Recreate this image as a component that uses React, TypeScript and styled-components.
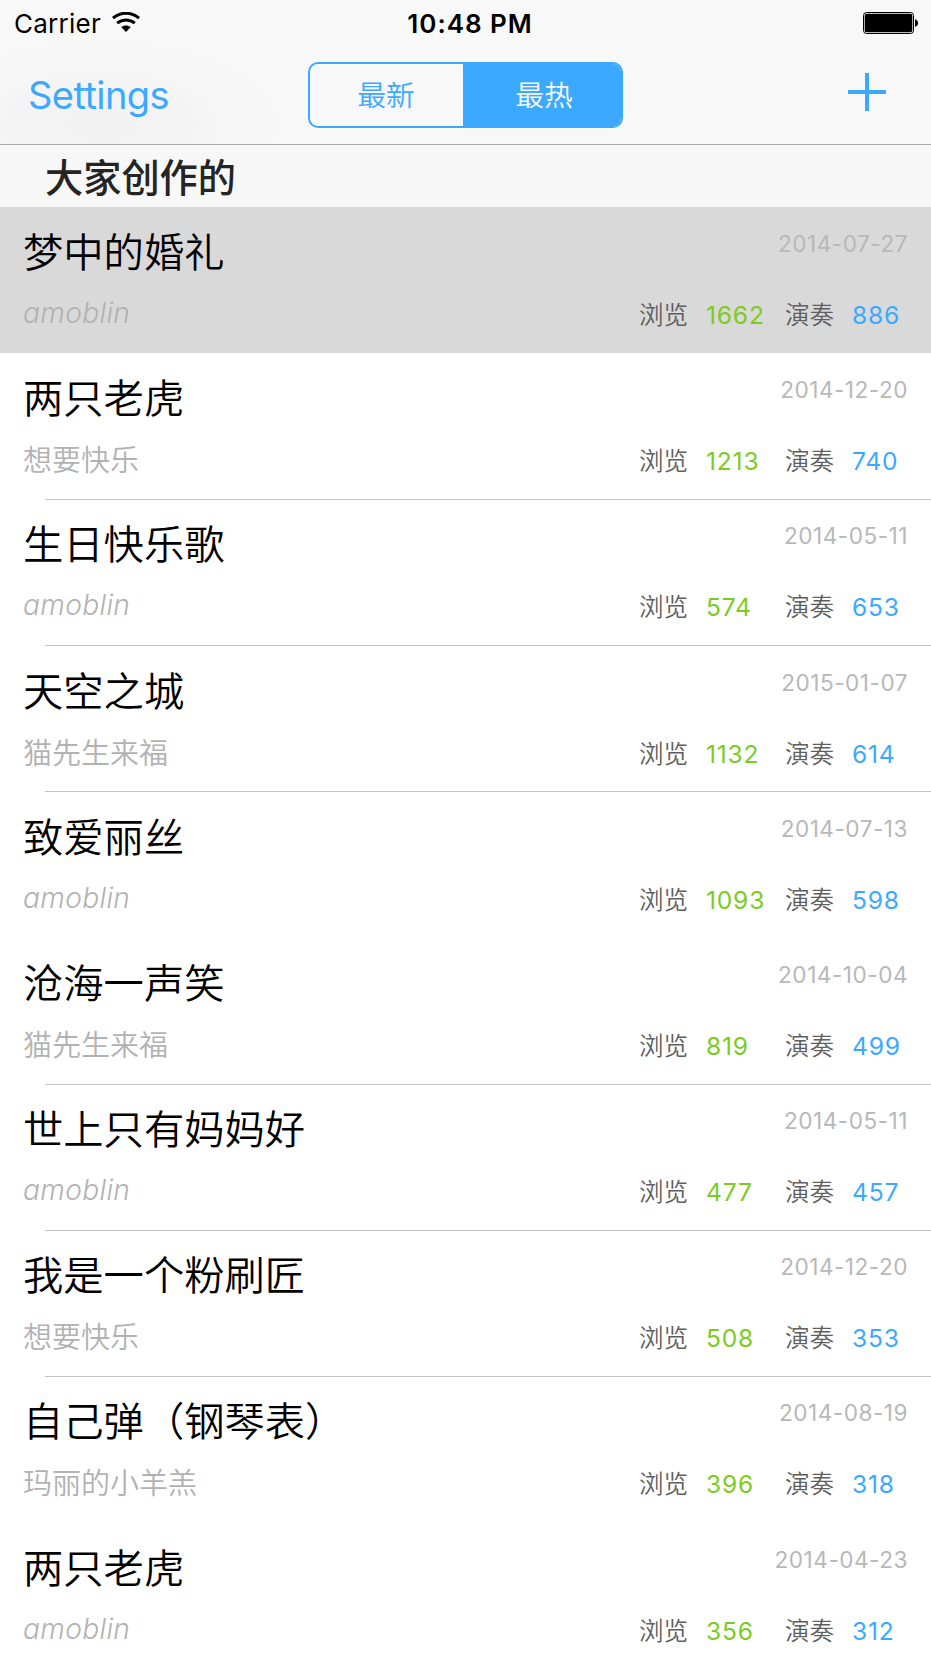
import React from "react";
import styled, { createGlobalStyle } from "styled-components";

const GlobalStyle = createGlobalStyle`
  *, *::before, *::after { box-sizing: border-box; }
  body {
    margin: 0;
    background: #fff;
    overflow: hidden;
    font-family: Inter, "Noto Sans CJK SC", sans-serif;
  }
`;

const Screen = styled.main`
  width: 931px;
  height: 1656px;
  overflow: hidden;
  display: flex;
  flex-direction: column;
  background: #fff;
`;

const TopBar = styled.header`
  flex: none;
  height: 145px;
  background: radial-gradient(ellipse 190px 90px at 100px 125px, #f1f1f1, rgba(247, 247, 247, 0)), #f8f8f8;
  border-bottom: 1px solid #a9a9a9;
`;

const StatusBar = styled.div`
  display: grid;
  grid-template-columns: 1fr auto 1fr;
  align-items: center;
  height: 47px;
  padding: 0 13px 0 14px;
  font-size: 26px;
  line-height: 47px;
  color: #000;
`;

const Carrier = styled.div`
  display: flex;
  align-items: center;
  gap: 11px;
  letter-spacing: 0.25px;

  svg { margin-top: -3px; }
`;

const Clock = styled.div`
  font-weight: 600;
  letter-spacing: 0.95px;
  padding-left: 8px;
`;

const Battery = styled.svg`
  justify-self: end;
  margin-top: -1px;
`;

const NavBar = styled.nav`
  display: grid;
  grid-template-columns: 1fr 315px 1fr;
  align-items: center;
  height: 95px;
  padding: 0 28px;
`;

const TextButton = styled.button`
  justify-self: start;
  padding: 0;
  border: 0;
  background: none;
  font: 400 38px/48px Inter, sans-serif;
  letter-spacing: -0.55px;
  color: #3ba9ff;
`;

const Segmented = styled.div`
  display: flex;
  height: 66px;
  border: 2px solid #3ba9ff;
  border-radius: 10px;
  overflow: hidden;
`;

const Segment = styled.button<{ $active?: boolean }>`
  flex: ${(p) => (p.$active ? "0 0 158px" : "1")};
  padding: ${(p) => (p.$active ? "0 0 2px 4px" : "0 1px 2px 0")};
  border: 0;
  background: ${(p) => (p.$active ? "#3ba9ff" : "transparent")};
  color: ${(p) => (p.$active ? "#f8f8f8" : "#3ba9ff")};
  font: 350 28.8px/60px "Noto Sans CJK SC", sans-serif;
`;

const AddButton = styled.button`
  justify-self: end;
  display: flex;
  margin: -5px 17px 0 0;
  padding: 0;
  border: 0;
  background: none;
`;

const SectionTitle = styled.h2`
  flex: none;
  height: 61.7px;
  margin: 0;
  padding-left: 45px;
  background: #f7f7f7;
  font-size: 38.2px;
  font-weight: 500;
  line-height: 66px;
  color: #242424;
`;

const SongList = styled.ul`
  margin: 0;
  padding: 0;
  list-style: none;
`;

const SongRow = styled.li<{ $selected?: boolean; $lineAbove?: boolean }>`
  display: flex;
  flex-direction: column;
  height: 146.18px;
  padding: 15.3px 23px 0 23px;
  background: ${(p) =>
    p.$selected
      ? "#d9d9d9"
      : p.$lineAbove
        ? "linear-gradient(#c4c4c4, #c4c4c4) 45px 0 / 100% 1px no-repeat"
        : "#fff"};
`;

const RowLine = styled.div<{ $height: number }>`
  display: flex;
  justify-content: space-between;
  height: ${(p) => p.$height}px;
`;

const SongTitle = styled.h3`
  margin: 0;
  font-family: "Noto Sans CJK SC", sans-serif;
  font-size: 40.3px;
  font-weight: 350;
  line-height: 55px;
  color: #000;
`;

const SongDate = styled.time`
  font-size: 22.6px;
  line-height: 44px;
  letter-spacing: 0.5px;
  color: #b8b8b8;
`;

const Author = styled.span<{ $latin: boolean }>`
  font-size: ${(p) => (p.$latin ? 28.2 : 29)}px;
  font-style: ${(p) => (p.$latin ? "italic" : "normal")};
  font-weight: 350;
  letter-spacing: ${(p) => (p.$latin ? 0.3 : 0)}px;
  line-height: ${(p) => (p.$latin ? 63.5 : 65)}px;
  color: #b2b2b2;
`;

const Stats = styled.div`
  display: grid;
  grid-template-columns: 67px 79px 67px 56px;
  line-height: 66px;
  font-size: 24.6px;
`;

const StatLabel = styled.span`
  font-weight: 350;
  color: #5f5f5f;
`;

const StatValue = styled.span<{ $color: string }>`
  letter-spacing: 0.8px;
  color: ${(p) => p.$color};
`;

type Song = {
  title: string;
  author: string;
  date: string;
  views: number;
  plays: number;
  selected?: boolean;
  divided?: boolean;
};

const songs: Song[] = [
  { title: "梦中的婚礼", author: "amoblin", date: "2014-07-27", views: 1662, plays: 886, selected: true },
  { title: "两只老虎", author: "想要快乐", date: "2014-12-20", views: 1213, plays: 740, divided: true },
  { title: "生日快乐歌", author: "amoblin", date: "2014-05-11", views: 574, plays: 653, divided: true },
  { title: "天空之城", author: "猫先生来福", date: "2015-01-07", views: 1132, plays: 614, divided: true },
  { title: "致爱丽丝", author: "amoblin", date: "2014-07-13", views: 1093, plays: 598 },
  { title: "沧海一声笑", author: "猫先生来福", date: "2014-10-04", views: 819, plays: 499, divided: true },
  { title: "世上只有妈妈好", author: "amoblin", date: "2014-05-11", views: 477, plays: 457, divided: true },
  { title: "我是一个粉刷匠", author: "想要快乐", date: "2014-12-20", views: 508, plays: 353, divided: true },
  { title: "自己弹（钢琴表）", author: "玛丽的小羊羔", date: "2014-08-19", views: 396, plays: 318 },
  { title: "两只老虎", author: "amoblin", date: "2014-04-23", views: 356, plays: 312 },
];

const isLatin = (text: string) => /^[\x00-\x7f]+$/.test(text);

function WifiIcon() {
  return (
    <svg width="28" height="20" viewBox="0 0 28 20" fill="none" stroke="#000">
      <path d="M1 6.2C8.4 -.4 19.6 -.4 27 6.2" strokeWidth="3" />
      <path d="M5.2 11.2C10.3 6.8 17.7 6.8 22.8 11.2" strokeWidth="3" />
      <path d="M14 20L9.2 15.1C12 12.8 16 12.8 18.8 15.1Z" fill="#000" stroke="none" />
    </svg>
  );
}

function BatteryIcon() {
  return (
    <Battery width="55" height="22" viewBox="0 0 55 22">
      <rect x=".5" y=".5" width="50" height="21" rx="3" fill="#f8f8f8" stroke="#000" />
      <rect x="1.7" y="1.7" width="47.6" height="18.6" rx="2" />
      <path d="M52 7.2C56 8 56 14 52 14.8Z" />
    </Battery>
  );
}

function SongItem({ song, lineAbove }: { song: Song; lineAbove?: boolean }) {
  return (
    <SongRow $selected={song.selected} $lineAbove={lineAbove}>
      <RowLine $height={60}>
        <SongTitle>{song.title}</SongTitle>
        <SongDate>{song.date}</SongDate>
      </RowLine>
      <RowLine $height={66}>
        <Author $latin={isLatin(song.author)}>{song.author}</Author>
        <Stats>
          <StatLabel>浏览</StatLabel>
          <StatValue $color="#7ccb1f">{song.views}</StatValue>
          <StatLabel>演奏</StatLabel>
          <StatValue $color="#3ba9ff">{song.plays}</StatValue>
        </Stats>
      </RowLine>
    </SongRow>
  );
}

export default function App() {
  return (
    <Screen>
      <GlobalStyle />
      <TopBar>
        <StatusBar>
          <Carrier>
            Carrier
            <WifiIcon />
          </Carrier>
          <Clock>10:48 PM</Clock>
          <BatteryIcon />
        </StatusBar>
        <NavBar>
          <TextButton>Settings</TextButton>
          <Segmented>
            <Segment>最新</Segment>
            <Segment $active>最热</Segment>
          </Segmented>
          <AddButton aria-label="Add">
            <svg width="38" height="38" viewBox="0 0 38 38">
              <path d="M17 0h4v17h17v4H21v17h-4V21H0v-4h17z" fill="#3ba9ff" />
            </svg>
          </AddButton>
        </NavBar>
      </TopBar>
      <SectionTitle>大家创作的</SectionTitle>
      <SongList>
        {songs.map((song, i) => (
          <SongItem key={i} song={song} lineAbove={songs[i - 1]?.divided} />
        ))}
      </SongList>
    </Screen>
  );
}
